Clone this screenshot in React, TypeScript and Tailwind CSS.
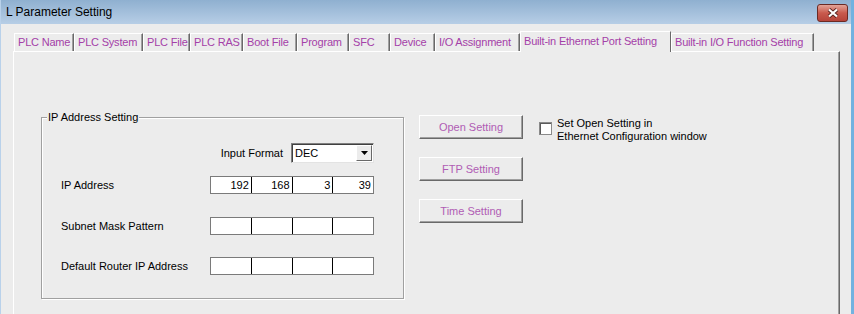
import React from "react";

const tabs = [
  { label: "PLC Name", w: 60 },
  { label: "PLC System", w: 69 },
  { label: "PLC File", w: 47 },
  { label: "PLC RAS", w: 53 },
  { label: "Boot File", w: 54 },
  { label: "Program", w: 52 },
  { label: "SFC", w: 41 },
  { label: "Device", w: 45 },
  { label: "I/O Assignment", w: 85 },
  { label: "Built-in Ethernet Port Setting", w: 151, active: true },
  { label: "Built-in I/O Function Setting", w: 143 },
];

function IpField({ values }: { values: string[] }) {
  return (
    <div className="flex w-[164px] h-[18px] border border-[#7a7a7a] bg-white">
      {values.map((v, i) => (
        <div
          key={i}
          className={`flex-1 text-right pr-[2px] leading-[16px] ${i > 0 ? "border-l border-black" : ""}`}
        >
          {v}
        </div>
      ))}
    </div>
  );
}

function IpRow({ label, values, className }: { label: string; values: string[]; className: string }) {
  return (
    <div className={`flex items-center pl-[19px] h-[18px] ${className}`}>
      <span className="w-[149px]">{label}</span>
      <IpField values={values} />
    </div>
  );
}

function WinButton({ children }: { children: React.ReactNode }) {
  return (
    <button className="w-[104px] h-[24px] bg-[#ececec] border border-t-white border-l-white border-b-[#696969] border-r-[#696969] shadow-[inset_-1px_-1px_0_#a0a0a0] text-[#b05cb4]">
      {children}
    </button>
  );
}

export default function App() {
  return (
    <div className="w-[854px] h-[314px] overflow-hidden flex flex-col bg-[#ececec] border-l border-l-[#b9d1ea] border-r-[3px] border-r-[#72b2e0] font-['Liberation_Sans',Arial,sans-serif] text-[11px] text-black">
      {/* title bar */}
      <div className="h-[24px] shrink-0 flex items-start justify-between pl-[5px] pr-[3px] bg-linear-to-b from-[#8fb0d0] to-[#b7cee6]">
        <span className="text-[12px] leading-[24px]">L Parameter Setting</span>
        <button className="mt-[4px] w-[31px] h-[18px] rounded-[3px] border border-[#6b2a24] bg-linear-to-b from-[#e2a398] via-[#c95a4d] to-[#b6443a] flex items-center justify-center">
          <svg width="14" height="10" viewBox="0 0 14 10">
            <path d="M3 1.5 L11 8.5 M11 1.5 L3 8.5" stroke="#5a2420" strokeWidth="4" />
            <path d="M3 1.5 L11 8.5 M11 1.5 L3 8.5" stroke="#ffffff" strokeWidth="2.2" />
          </svg>
        </button>
      </div>

      <div className="flex-1 flex flex-col pl-[12px] pt-[7px]">
        {/* tabs */}
        <div className="relative z-10 flex items-end h-[20px] ml-[1px]">
          {tabs.map((t) => (
            <div
              key={t.label}
              style={{ width: t.w }}
              className={
                t.active
                  ? "h-[21px] -mb-[1px] overflow-hidden bg-[#ececec] border-t border-l border-white border-r border-r-[#696969] pl-[3px] leading-[19px] tracking-[-0.2px] text-[#a440a8] whitespace-nowrap"
                  : "h-[18px] overflow-hidden bg-[#ececec] border-t border-l border-white border-r border-r-[#696969] shadow-[inset_-1px_0_0_#a0a0a0] pl-[3px] leading-[17px] tracking-[-0.2px] text-[#a440a8] whitespace-nowrap"
              }
            >
              {t.label}
            </div>
          ))}
        </div>

        {/* panel */}
        <div className="w-[827px] flex-1 border-l border-t border-white border-r border-r-[#696969] shadow-[inset_-1px_0_0_#a0a0a0] pl-[27px] pt-[64px] flex items-start">
          {/* IP group */}
          <div className="relative mt-[1px] w-[363px] border border-[#a0a0a0] shadow-[1px_1px_0_#fff,inset_1px_1px_0_#fff]">
            <span className="absolute left-[5px] -top-[7px] px-[1px] bg-[#ececec] leading-[13px]">IP Address Setting</span>
            <div className="flex flex-col pt-[25px] pb-[23px]">
              <div className="flex justify-end items-center gap-[8px] pr-[29px] h-[20px]">
                <span>Input Format</span>
                <div className="w-[83px] h-[20px] flex items-center bg-white border border-t-[#808080] border-l-[#808080] border-b-[#e3e3e3] border-r-[#e3e3e3] shadow-[inset_1px_1px_0_#404040]">
                  <span className="flex-1 pl-[3px]">DEC</span>
                  <div className="w-[16px] h-[16px] mr-[1px] flex items-center justify-center bg-[#ececec] border border-t-white border-l-white border-b-[#696969] border-r-[#696969]">
                    <svg width="7" height="4" viewBox="0 0 7 4">
                      <path d="M0 0 H7 L3.5 4 Z" fill="#000" />
                    </svg>
                  </div>
                </div>
              </div>
              <IpRow label="IP Address" values={["192", "168", "3", "39"]} className="mt-[13px]" />
              <IpRow label="Subnet Mask Pattern" values={["", "", "", ""]} className="mt-[23px]" />
              <IpRow label="Default Router IP Address" values={["", "", "", ""]} className="mt-[22px]" />
            </div>
          </div>

          {/* buttons */}
          <div className="ml-[15px] -mt-[1px] flex flex-col gap-[18px]">
            <WinButton>Open Setting</WinButton>
            <WinButton>FTP Setting</WinButton>
            <WinButton>Time Setting</WinButton>
          </div>

          {/* checkbox */}
          <div className="ml-[16px] flex items-start gap-[5px]">
            <div className="mt-[6px] w-[13px] h-[13px] bg-white border border-[#8a8a8a] shadow-[inset_1px_1px_0_#5a5a5a]" />
            <div className="mt-[1px] leading-[13px]">
              Set Open Setting in
              <br />
              Ethernet Configuration window
            </div>
          </div>
        </div>
      </div>
    </div>
  );
}
